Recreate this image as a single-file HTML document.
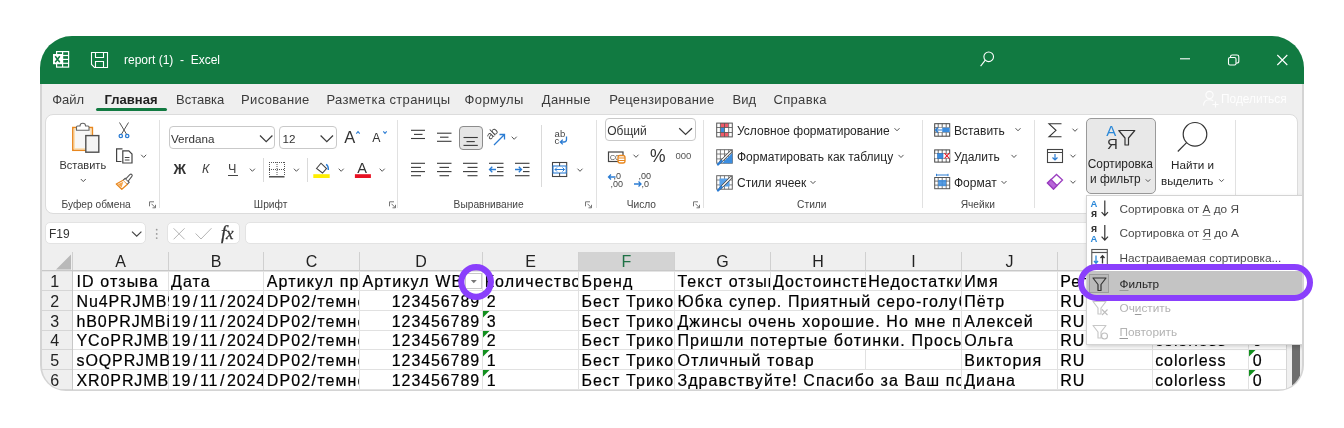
<!DOCTYPE html>
<html><head><meta charset="utf-8">
<style>
*{box-sizing:border-box;margin:0;padding:0}
html,body{width:1344px;height:428px;overflow:hidden;background:#fff;font-family:"Liberation Sans",sans-serif;color:#242424}
#win{position:absolute;left:0;top:0;width:1344px;height:428px;will-change:transform;clip-path:inset(36px 40px 37px 40px round 32px 32px 26px 26px)}
.a{position:absolute}
.t{position:absolute;white-space:pre}
svg{position:absolute;left:0;top:0;overflow:visible}
</style></head><body>
<div id="win">
<div class="a" style="left:40px;top:36px;width:1264px;height:356px;background:#efefef"></div>
<div class="a" style="left:40px;top:36px;width:2px;height:356px;background:#d6d6d6"></div>
<div class="a" style="left:1302px;top:36px;width:2px;height:356px;background:#d6d6d6"></div>
<div class="a" style="left:40px;top:36px;width:1264px;height:48px;background:#117a41"></div>
<div class="t" style="left:124.00px;top:54.24px;font-size:12px;line-height:12px;color:#fff;">report (1)  -  Excel</div>
<div class="t" style="left:52.20px;top:93.40px;font-size:13px;line-height:13px;color:#3b3b3b;">Файл</div>
<div class="t" style="left:104.60px;top:93.40px;font-size:13px;line-height:13px;color:#222;font-weight:700;">Главная</div>
<div class="t" style="left:176.00px;top:93.40px;font-size:13px;line-height:13px;color:#3b3b3b;">Вставка</div>
<div class="t" style="left:241.00px;top:93.40px;font-size:13px;line-height:13px;color:#3b3b3b;letter-spacing:0.35px;">Рисование</div>
<div class="t" style="left:326.50px;top:93.40px;font-size:13px;line-height:13px;color:#3b3b3b;letter-spacing:0.35px;">Разметка страницы</div>
<div class="t" style="left:464.60px;top:93.40px;font-size:13px;line-height:13px;color:#3b3b3b;letter-spacing:0.35px;">Формулы</div>
<div class="t" style="left:541.80px;top:93.40px;font-size:13px;line-height:13px;color:#3b3b3b;letter-spacing:0.35px;">Данные</div>
<div class="t" style="left:609.20px;top:93.40px;font-size:13px;line-height:13px;color:#3b3b3b;letter-spacing:0.35px;">Рецензирование</div>
<div class="t" style="left:732.50px;top:93.40px;font-size:13px;line-height:13px;color:#3b3b3b;">Вид</div>
<div class="t" style="left:773.40px;top:93.40px;font-size:13px;line-height:13px;color:#3b3b3b;letter-spacing:0.35px;">Справка</div>
<div class="a" style="left:96px;top:108px;width:71px;height:3px;background:#117a41;border-radius:1.5px"></div>
<div class="t" style="left:1221.00px;top:93.93px;font-size:11.9px;line-height:11.9px;color:#fff;opacity:0.95">Поделиться</div>
<svg width="1344" height="428"><g fill="none" stroke="#fff" stroke-width="1.2"><rect x="56.6" y="51.6" width="12" height="15.5"/><line x1="62.6" y1="51.6" x2="62.6" y2="67.1"/><line x1="62.6" y1="55.5" x2="68.6" y2="55.5"/><line x1="62.6" y1="59.4" x2="68.6" y2="59.4"/><line x1="62.6" y1="63.3" x2="68.6" y2="63.3"/></g><rect x="53" y="54" width="9.2" height="10.2" fill="#fff"/><path d="M55.2 56.2 L59.8 62.2 M59.8 56.2 L55.2 62.2" stroke="#117a41" stroke-width="1.5"/><g fill="none" stroke="#fff" stroke-width="1.1"><path d="M91.5 52.5 H107.5 V67.5 H94.5 L91.5 64.5 Z"/><path d="M95.5 52.5 V57.5 H103.5 V52.5"/><path d="M95.5 67.5 V61.5 H103.5 V67.5"/></g><g fill="none" stroke="#fff" stroke-width="1.1"><circle cx="988.7" cy="56.8" r="4.8"/><line x1="985.3" y1="60.2" x2="980.6" y2="66.2"/><line x1="1180" y1="58.8" x2="1190" y2="58.8"/><rect x="1228.5" y="57.5" width="7.5" height="7.5" rx="1.5"/><path d="M1230.5 57.5 V56.8 Q1230.5 55 1232.3 55 H1237 Q1238.8 55 1238.8 56.8 V61.5 Q1238.8 63.2 1236.2 63.2"/><path d="M1277.3 55 L1287.3 65 M1287.3 55 L1277.3 65"/></g><g fill="none" stroke="#fff" stroke-width="1.1" opacity="0.9"><circle cx="1209.5" cy="95" r="3.6"/><path d="M1203.5 105.5 Q1203.8 99.8 1209.5 99.8 Q1211.8 99.8 1213.2 100.8"/><path d="M1212.5 104.5 H1218.5 M1215.5 101.5 V107.5"/></g></svg>
<div class="a" style="left:45px;top:114px;width:1253px;height:100px;background:#fff;border:1px solid #dcdcdc;border-radius:8px"></div>
<div class="t" style="left:59.50px;top:159.69px;font-size:11px;line-height:11px;color:#333;">Вставить</div>
<div class="t" style="left:61.50px;top:199.77px;font-size:10.2px;line-height:10.2px;color:#444;">Буфер обмена</div>
<div class="a" style="left:159px;top:120px;width:1px;height:88px;background:#e1e1e1"></div>
<div class="a" style="left:168.8px;top:126.4px;width:106.6px;height:23px;border:1px solid #c9c9c9;border-radius:4px;background:#fff"></div>
<div class="t" style="left:171.00px;top:132.94px;font-size:11.65px;line-height:11.65px;color:#333;">Verdana</div>
<div class="a" style="left:279.4px;top:126.4px;width:57.8px;height:23px;border:1px solid #c9c9c9;border-radius:4px;background:#fff"></div>
<div class="t" style="left:282.50px;top:132.94px;font-size:11.65px;line-height:11.65px;color:#333;">12</div>
<div class="t" style="left:344.20px;top:128.83px;font-size:16.5px;line-height:16.5px;color:#333;">A</div>
<div class="t" style="left:372.30px;top:132.39px;font-size:12.3px;line-height:12.3px;color:#333;">A</div>
<div class="t" style="left:173.60px;top:162.52px;font-size:13.8px;line-height:13.8px;color:#333;font-weight:700;">Ж</div>
<div class="t" style="left:202.00px;top:163.33px;font-size:12.6px;line-height:12.6px;color:#444;font-style:italic">К</div>
<div class="t" style="left:228.00px;top:163.33px;font-size:12.6px;line-height:12.6px;color:#444;">Ч</div>
<div class="a" style="left:228px;top:175.3px;width:9.5px;height:1.2px;background:#444"></div>
<div class="a" style="left:262.5px;top:158px;width:1px;height:24px;background:#dadada"></div>
<div class="a" style="left:306.6px;top:158px;width:1px;height:24px;background:#dadada"></div>
<div class="t" style="left:357.20px;top:160.84px;font-size:14.6px;line-height:14.6px;color:#333;">A</div>
<div class="t" style="left:253.80px;top:199.77px;font-size:10.2px;line-height:10.2px;color:#444;">Шрифт</div>
<div class="a" style="left:397.4px;top:120px;width:1px;height:88px;background:#e1e1e1"></div>
<div class="a" style="left:458.9px;top:126.4px;width:23.9px;height:23.2px;background:#e6e6e6;border:1px solid #8c8c8c;border-radius:4px"></div>
<div class="t" style="left:486px;top:128px;font-size:11px;line-height:11px;color:#444;transform:rotate(-45deg);transform-origin:50% 50%">ab</div>
<div class="a" style="left:541.3px;top:125px;width:1px;height:62px;background:#dadada"></div>
<div class="t" style="left:554.60px;top:129.46px;font-size:9.5px;line-height:9.5px;color:#444;">ab</div>
<div class="t" style="left:554.60px;top:135.56px;font-size:9.5px;line-height:9.5px;color:#444;">c</div>
<div class="t" style="left:453.60px;top:199.77px;font-size:10.2px;line-height:10.2px;color:#444;">Выравнивание</div>
<div class="a" style="left:595.5px;top:120px;width:1px;height:88px;background:#e1e1e1"></div>
<div class="a" style="left:605.4px;top:118.4px;width:90.2px;height:23px;border:1px solid #c9c9c9;border-radius:4px;background:#fff"></div>
<div class="t" style="left:607.20px;top:124.74px;font-size:12px;line-height:12px;color:#333;">Общий</div>
<div class="t" style="left:650.00px;top:147.59px;font-size:17.5px;line-height:17.5px;color:#333;">%</div>
<div class="t" style="left:675.50px;top:150.86px;font-size:9.5px;line-height:9.5px;color:#555;">000</div>
<div class="t" style="left:613.50px;top:171.88px;font-size:9px;line-height:9px;color:#444;">,0</div>
<div class="t" style="left:610.50px;top:179.88px;font-size:9px;line-height:9px;color:#444;">,00</div>
<div class="t" style="left:638.50px;top:171.88px;font-size:9px;line-height:9px;color:#444;">,00</div>
<div class="t" style="left:641.50px;top:179.88px;font-size:9px;line-height:9px;color:#444;">,0</div>
<div class="t" style="left:491.40px;width:300px;text-align:center;top:199.77px;font-size:10.2px;line-height:10.2px;color:#444;">Число</div>
<div class="a" style="left:703px;top:120px;width:1px;height:88px;background:#e1e1e1"></div>
<div class="t" style="left:737.00px;top:124.74px;font-size:12px;line-height:12px;color:#262626;">Условное форматирование</div>
<div class="t" style="left:737.00px;top:151.04px;font-size:12px;line-height:12px;color:#262626;">Форматировать как таблицу</div>
<div class="t" style="left:737.00px;top:177.24px;font-size:12px;line-height:12px;color:#262626;">Стили ячеек</div>
<div class="t" style="left:661.80px;width:300px;text-align:center;top:199.77px;font-size:10.2px;line-height:10.2px;color:#444;">Стили</div>
<div class="a" style="left:921.5px;top:120px;width:1px;height:88px;background:#e1e1e1"></div>
<div class="t" style="left:954.00px;top:124.74px;font-size:12px;line-height:12px;color:#262626;">Вставить</div>
<div class="t" style="left:954.00px;top:151.04px;font-size:12px;line-height:12px;color:#262626;">Удалить</div>
<div class="t" style="left:954.00px;top:177.24px;font-size:12px;line-height:12px;color:#262626;">Формат</div>
<div class="t" style="left:827.80px;width:300px;text-align:center;top:199.77px;font-size:10.2px;line-height:10.2px;color:#444;">Ячейки</div>
<div class="a" style="left:1034.3px;top:120px;width:1px;height:88px;background:#e1e1e1"></div>
<div class="a" style="left:1085.7px;top:118.4px;width:70.6px;height:75.3px;background:#e8e8e8;border:1px solid #9a9a9a;border-radius:5px"></div>
<div class="t" style="left:1106.30px;top:122.50px;font-size:15px;line-height:15px;color:#2b88d8;">A</div>
<div class="t" style="left:1107.00px;top:135.70px;font-size:15px;line-height:15px;color:#333;">Я</div>
<div class="t" style="left:1087.70px;top:158.73px;font-size:11.9px;line-height:11.9px;color:#262626;">Сортировка</div>
<div class="t" style="left:1090.00px;top:174.43px;font-size:11.9px;line-height:11.9px;color:#262626;">и фильтр</div>
<div class="t" style="left:1171.00px;top:158.90px;font-size:11.7px;line-height:11.7px;color:#262626;">Найти и</div>
<div class="t" style="left:1161.00px;top:174.60px;font-size:11.7px;line-height:11.7px;color:#262626;">выделить</div>
<div class="a" style="left:1235px;top:120px;width:1px;height:88px;background:#e1e1e1"></div>
<svg width="1344" height="428"><rect x="72.8" y="127.5" width="19.6" height="22.8" fill="#f7f7f7" stroke="#e8871e" stroke-width="1.5"/><rect x="74.3" y="129" width="16.6" height="19.8" fill="none" stroke="#fcd9a0" stroke-width="1"/><path d="M76.5 130.2 V127 Q76.5 126 77.5 126 H80 A2.8 2.8 0 0 1 85.6 126 H88 Q89 126 89 127 V130.2 Z" fill="#fff" stroke="#666" stroke-width="1.1"/><rect x="85.8" y="135.6" width="13" height="16.6" fill="#f4f4f4" stroke="#505050" stroke-width="1.4"/><path d="M80.80 179.00 L83.30 181.60 L85.80 179.00" fill="none" stroke="#555" stroke-width="1"/><path d="M119.5 122.5 L126.6 134.3 M128.5 122.5 L121.4 134.3" stroke="#555" stroke-width="1" fill="none"/><circle cx="120.8" cy="136" r="1.7" fill="none" stroke="#2b7cd3" stroke-width="1.3"/><circle cx="127.2" cy="136" r="1.7" fill="none" stroke="#2b7cd3" stroke-width="1.3"/><path d="M121.5 161.5 H116.6 V148.8 H122.5" fill="none" stroke="#444" stroke-width="1.2"/><path d="M122.8 150.8 H128.8 L132 154 V163 H122.8 Z" fill="#fff" stroke="#444" stroke-width="1.2"/><path d="M124.8 157.5 H129.5 M124.8 160 H129.5" stroke="#444" stroke-width="1"/><path d="M141.20 154.80 L143.70 157.40 L146.20 154.80" fill="none" stroke="#555" stroke-width="1"/><path d="M116.3 184 L123.5 180 L127.5 184.3 L121.8 189.2 Z" fill="#fff" stroke="#e8871e" stroke-width="1.3" stroke-linejoin="round"/><path d="M117.8 184.3 L123.3 181.8 L121.6 187.5 Z" fill="#f6a54b"/><path d="M123.3 180.2 L125.2 178.3 L129.2 182.3 L127.4 184.1" fill="#fff" stroke="#555" stroke-width="1.1"/><path d="M125.8 178.8 L129.8 174.6 Q131 173.6 131.9 174.6 Q132.7 175.6 131.7 176.6 L128.3 181" fill="#fff" stroke="#555" stroke-width="1.1"/><path d="M149.5 206.3 V201.8 H154" fill="none" stroke="#777" stroke-width="1"/><path d="M151.5 203.8 L155.5 207.8 M155.5 204.8 V207.8 H152.5" fill="none" stroke="#777" stroke-width="1"/><path d="M260 135.5 L266.2 141.7 L272.4 135.5" fill="none" stroke="#3a3a3a" stroke-width="1.2"/><path d="M320.6 135.5 L326.8 141.7 L333 135.5" fill="none" stroke="#3a3a3a" stroke-width="1.2"/><path d="M356.3 133.6 L358 131.6 L359.7 133.6" fill="none" stroke="#2b7cd3" stroke-width="1.1"/><path d="M383.3 131.3 L385 133.3 L386.7 131.3" fill="none" stroke="#2b7cd3" stroke-width="1.1"/><path d="M249.90 168.70 L252.40 171.30 L254.90 168.70" fill="none" stroke="#555" stroke-width="1"/><g stroke="#555" stroke-width="1" stroke-dasharray="1 1" fill="none"><line x1="269.5" y1="162" x2="269.5" y2="176"/><line x1="284.5" y1="162" x2="284.5" y2="176"/><line x1="269" y1="162.5" x2="285" y2="162.5"/><line x1="277" y1="162" x2="277" y2="176"/><line x1="269" y1="169.5" x2="285" y2="169.5"/></g><line x1="269" y1="176.8" x2="284.5" y2="176.8" stroke="#333" stroke-width="1.3"/><path d="M293.90 168.70 L296.40 171.30 L298.90 168.70" fill="none" stroke="#555" stroke-width="1"/><path d="M316.5 168.5 L321 163.2 L326.5 168.5 L322.5 173 Z" fill="#fff" stroke="#444" stroke-width="1.1"/><path d="M326 164.5 Q328.5 165.5 328.3 170" fill="none" stroke="#2b7cd3" stroke-width="1.5"/><rect x="313.3" y="174.2" width="16.4" height="3.8" fill="#ffee00"/><path d="M338.70 168.70 L341.20 171.30 L343.70 168.70" fill="none" stroke="#555" stroke-width="1"/><rect x="354.9" y="174.2" width="16" height="3.8" fill="#e81123"/><path d="M379.70 168.70 L382.20 171.30 L384.70 168.70" fill="none" stroke="#555" stroke-width="1"/><path d="M389.5 206.3 V201.8 H394" fill="none" stroke="#777" stroke-width="1"/><path d="M391.5 203.8 L395.5 207.8 M395.5 204.8 V207.8 H392.5" fill="none" stroke="#777" stroke-width="1"/><line x1="411" y1="130.3" x2="425" y2="130.3" stroke="#3a3a3a" stroke-width="1.1"/><line x1="414" y1="134.4" x2="422.5" y2="134.4" stroke="#3a3a3a" stroke-width="1.1"/><line x1="411" y1="138.5" x2="425" y2="138.5" stroke="#3a3a3a" stroke-width="1.1"/><line x1="437" y1="133.2" x2="451.5" y2="133.2" stroke="#3a3a3a" stroke-width="1.1"/><line x1="440" y1="137.2" x2="448.5" y2="137.2" stroke="#3a3a3a" stroke-width="1.1"/><line x1="437" y1="141.3" x2="451.5" y2="141.3" stroke="#3a3a3a" stroke-width="1.1"/><line x1="463.5" y1="137.5" x2="477.8" y2="137.5" stroke="#3a3a3a" stroke-width="1.1"/><line x1="466.5" y1="141.6" x2="474.8" y2="141.6" stroke="#3a3a3a" stroke-width="1.1"/><line x1="463.5" y1="145.4" x2="477.8" y2="145.4" stroke="#3a3a3a" stroke-width="1.1"/><path d="M494 145 L504.5 134.5 M499.5 134.5 H504.5 V139.5" fill="none" stroke="#2b7cd3" stroke-width="1.3"/><path d="M511.70 136.70 L514.20 139.30 L516.70 136.70" fill="none" stroke="#555" stroke-width="1"/><line x1="411" y1="163.3" x2="425" y2="163.3" stroke="#3a3a3a" stroke-width="1.1"/><line x1="411" y1="167.4" x2="421" y2="167.4" stroke="#3a3a3a" stroke-width="1.1"/><line x1="411" y1="171.6" x2="425" y2="171.6" stroke="#3a3a3a" stroke-width="1.1"/><line x1="411" y1="175.7" x2="421" y2="175.7" stroke="#3a3a3a" stroke-width="1.1"/><line x1="437" y1="163.3" x2="451.5" y2="163.3" stroke="#3a3a3a" stroke-width="1.1"/><line x1="439.5" y1="167.4" x2="449" y2="167.4" stroke="#3a3a3a" stroke-width="1.1"/><line x1="437" y1="171.6" x2="451.5" y2="171.6" stroke="#3a3a3a" stroke-width="1.1"/><line x1="439.5" y1="175.7" x2="449" y2="175.7" stroke="#3a3a3a" stroke-width="1.1"/><line x1="463" y1="163.3" x2="477.5" y2="163.3" stroke="#3a3a3a" stroke-width="1.1"/><line x1="467.5" y1="167.4" x2="477.5" y2="167.4" stroke="#3a3a3a" stroke-width="1.1"/><line x1="463" y1="171.6" x2="477.5" y2="171.6" stroke="#3a3a3a" stroke-width="1.1"/><line x1="467.5" y1="175.7" x2="477.5" y2="175.7" stroke="#3a3a3a" stroke-width="1.1"/><line x1="489" y1="163.3" x2="503.5" y2="163.3" stroke="#3a3a3a" stroke-width="1.1"/><line x1="497" y1="167.4" x2="503.5" y2="167.4" stroke="#3a3a3a" stroke-width="1.1"/><line x1="497" y1="171.6" x2="503.5" y2="171.6" stroke="#3a3a3a" stroke-width="1.1"/><line x1="489" y1="175.7" x2="503.5" y2="175.7" stroke="#3a3a3a" stroke-width="1.1"/><path d="M489.5 169.5 H496 M492.3 166.8 L489.5 169.5 L492.3 172.2" fill="none" stroke="#2b7cd3" stroke-width="1.3"/><line x1="515" y1="163.3" x2="529.5" y2="163.3" stroke="#3a3a3a" stroke-width="1.1"/><line x1="523" y1="167.4" x2="529.5" y2="167.4" stroke="#3a3a3a" stroke-width="1.1"/><line x1="523" y1="171.6" x2="529.5" y2="171.6" stroke="#3a3a3a" stroke-width="1.1"/><line x1="515" y1="175.7" x2="529.5" y2="175.7" stroke="#3a3a3a" stroke-width="1.1"/><path d="M515 169.5 H521.5 M518.8 166.8 L521.5 169.5 L518.8 172.2" fill="none" stroke="#2b7cd3" stroke-width="1.3"/><path d="M566.5 136.5 V139.5 Q566.5 142 564 142 H560.5 M562.8 139.6 L560.3 142 L562.8 144.4" fill="none" stroke="#2b7cd3" stroke-width="1.3"/><rect x="552.5" y="162.5" width="14.2" height="14" fill="#fff" stroke="#444" stroke-width="1.1"/><rect x="553" y="166" width="13.2" height="7" fill="#fff" stroke="#2b7cd3" stroke-width="1.1"/><line x1="559.6" y1="162.5" x2="559.6" y2="166" stroke="#444"/><line x1="559.6" y1="173" x2="559.6" y2="176.5" stroke="#444"/><path d="M555 169.5 H564.5 M557 167.5 L555 169.5 L557 171.5 M562.5 167.5 L564.5 169.5 L562.5 171.5" fill="none" stroke="#2b7cd3" stroke-width="1"/><path d="M577.50 168.70 L580.00 171.30 L582.50 168.70" fill="none" stroke="#555" stroke-width="1"/><path d="M585.5 206.3 V201.8 H590" fill="none" stroke="#777" stroke-width="1"/><path d="M587.5 203.8 L591.5 207.8 M591.5 204.8 V207.8 H588.5" fill="none" stroke="#777" stroke-width="1"/><path d="M679.2 128.2 L685.6 134.4 L692 128.2" fill="none" stroke="#3a3a3a" stroke-width="1.2"/><rect x="608.5" y="152" width="14.5" height="9.5" fill="#fff" stroke="#444" stroke-width="1.2"/><text x="610" y="159.5" font-size="7" font-family="Liberation Sans" fill="#444">СС</text><rect x="618" y="155.5" width="7" height="7.5" rx="2" fill="#fff" stroke="#e8871e" stroke-width="1.3"/><path d="M618 158 H625 M618 160.5 H625" stroke="#e8871e" stroke-width="1"/><path d="M633.50 154.70 L636.00 157.30 L638.50 154.70" fill="none" stroke="#555" stroke-width="1"/><path d="M608.5 177 H615.5 M611 174.5 L608.5 177 L611 179.5" fill="none" stroke="#2b7cd3" stroke-width="1.3"/><path d="M634 184 H641 M638.5 181.5 L641 184 L638.5 186.5" fill="none" stroke="#2b7cd3" stroke-width="1.3"/><path d="M693.5 206.3 V201.8 H698" fill="none" stroke="#777" stroke-width="1"/><path d="M695.5 203.8 L699.5 207.8 M699.5 204.8 V207.8 H696.5" fill="none" stroke="#777" stroke-width="1"/><rect x="720.5" y="123" width="8" height="4.5" fill="#ee5a6a"/><rect x="720.5" y="132.2" width="8" height="4.5" fill="#ee5a6a"/><rect x="720.5" y="127.6" width="4" height="4.6" fill="#3b8de0"/><rect x="716.7" y="123.1" width="15.600000000000001" height="13.8" fill="none" stroke="#555" stroke-width="1"/><line x1="720.4" y1="123.1" x2="720.4" y2="136.9" stroke="#555" stroke-width="0.8"/><line x1="724.5" y1="123.1" x2="724.5" y2="136.9" stroke="#555" stroke-width="0.8"/><line x1="728.7" y1="123.1" x2="728.7" y2="136.9" stroke="#555" stroke-width="0.8"/><line x1="716.7" y1="127.5" x2="732.3000000000001" y2="127.5" stroke="#555" stroke-width="0.8"/><line x1="716.7" y1="132.5" x2="732.3000000000001" y2="132.5" stroke="#555" stroke-width="0.8"/><path d="M894.50 128.20 L897.00 130.80 L899.50 128.20" fill="none" stroke="#555" stroke-width="1"/><rect x="716.7" y="149.7" width="15.600000000000001" height="13.5" fill="none" stroke="#666" stroke-width="1"/><line x1="720.4" y1="149.7" x2="720.4" y2="163.2" stroke="#666" stroke-width="0.8"/><line x1="724.5" y1="149.7" x2="724.5" y2="163.2" stroke="#666" stroke-width="0.8"/><line x1="728.7" y1="149.7" x2="728.7" y2="163.2" stroke="#666" stroke-width="0.8"/><line x1="716.7" y1="154.0" x2="732.3000000000001" y2="154.0" stroke="#666" stroke-width="0.8"/><line x1="716.7" y1="158.9" x2="732.3000000000001" y2="158.9" stroke="#666" stroke-width="0.8"/><path d="M722 163.2 L732.3 153 V163.2 Z" fill="#3b8de0"/><path d="M720.5 162 L731 151.5" stroke="#444" stroke-width="2.6" stroke-linecap="round"/><path d="M720.5 162 L731 151.5" stroke="#fff" stroke-width="1.2" stroke-linecap="round"/><path d="M718 164.5 L721.5 161" stroke="#2b7cd3" stroke-width="2.4" stroke-linecap="round"/><path d="M898.50 154.90 L901.00 157.50 L903.50 154.90" fill="none" stroke="#555" stroke-width="1"/><rect x="716.7" y="175.7" width="15.600000000000001" height="13.5" fill="none" stroke="#666" stroke-width="1"/><line x1="720.4" y1="175.7" x2="720.4" y2="189.2" stroke="#666" stroke-width="0.8"/><line x1="724.5" y1="175.7" x2="724.5" y2="189.2" stroke="#666" stroke-width="0.8"/><line x1="728.7" y1="175.7" x2="728.7" y2="189.2" stroke="#666" stroke-width="0.8"/><line x1="716.7" y1="180.0" x2="732.3000000000001" y2="180.0" stroke="#666" stroke-width="0.8"/><line x1="716.7" y1="184.9" x2="732.3000000000001" y2="184.9" stroke="#666" stroke-width="0.8"/><rect x="719.5" y="178.5" width="10" height="8" fill="#5aa2ea"/><path d="M720.5 188 L731 177.5" stroke="#444" stroke-width="2.6" stroke-linecap="round"/><path d="M720.5 188 L731 177.5" stroke="#fff" stroke-width="1.2" stroke-linecap="round"/><path d="M718 190.5 L721.5 187" stroke="#2b7cd3" stroke-width="2.4" stroke-linecap="round"/><path d="M810.50 181.00 L813.00 183.60 L815.50 181.00" fill="none" stroke="#555" stroke-width="1"/><rect x="934.7" y="123.7" width="15" height="12.5" fill="none" stroke="#444" stroke-width="1"/><line x1="938.2" y1="123.7" x2="938.2" y2="136.2" stroke="#444" stroke-width="0.8"/><line x1="942.2" y1="123.7" x2="942.2" y2="136.2" stroke="#444" stroke-width="0.8"/><line x1="946.2" y1="123.7" x2="946.2" y2="136.2" stroke="#444" stroke-width="0.8"/><line x1="934.7" y1="127.7" x2="949.7" y2="127.7" stroke="#444" stroke-width="0.8"/><line x1="934.7" y1="132.2" x2="949.7" y2="132.2" stroke="#444" stroke-width="0.8"/><rect x="938.2" y="127.7" width="11.5" height="4.5" fill="#fff"/><rect x="942.2" y="127.7" width="7.5" height="4.5" fill="#3b8de0"/><path d="M935.5 130 H942 M938 127.5 L935.5 130 L938 132.5" fill="none" stroke="#2b7cd3" stroke-width="1.2"/><path d="M1015.50 128.20 L1018.00 130.80 L1020.50 128.20" fill="none" stroke="#555" stroke-width="1"/><rect x="934.7" y="149.9" width="15" height="12.2" fill="none" stroke="#444" stroke-width="1"/><line x1="938.2" y1="149.9" x2="938.2" y2="162.1" stroke="#444" stroke-width="0.8"/><line x1="942.2" y1="149.9" x2="942.2" y2="162.1" stroke="#444" stroke-width="0.8"/><line x1="946.2" y1="149.9" x2="946.2" y2="162.1" stroke="#444" stroke-width="0.8"/><line x1="934.7" y1="153.8" x2="949.7" y2="153.8" stroke="#444" stroke-width="0.8"/><line x1="934.7" y1="158.2" x2="949.7" y2="158.2" stroke="#444" stroke-width="0.8"/><rect x="934.7" y="153.8" width="15" height="4.4" fill="#fff"/><rect x="937.5" y="153.5" width="5.5" height="5" fill="#3b8de0" stroke="#2b6cb3" stroke-width="0.6"/><path d="M944.5 153.2 L949.3 158.5 M949.3 153.2 L944.5 158.5" stroke="#e81123" stroke-width="1.1"/><path d="M1011.50 154.90 L1014.00 157.50 L1016.50 154.90" fill="none" stroke="#555" stroke-width="1"/><rect x="934.7" y="177.5" width="15" height="11.2" fill="none" stroke="#555" stroke-width="1"/><line x1="938.2" y1="177.5" x2="938.2" y2="188.7" stroke="#555" stroke-width="0.8"/><line x1="942.2" y1="177.5" x2="942.2" y2="188.7" stroke="#555" stroke-width="0.8"/><line x1="946.2" y1="177.5" x2="946.2" y2="188.7" stroke="#555" stroke-width="0.8"/><line x1="934.7" y1="181.1" x2="949.7" y2="181.1" stroke="#555" stroke-width="0.8"/><line x1="934.7" y1="185.1" x2="949.7" y2="185.1" stroke="#555" stroke-width="0.8"/><rect x="938.2" y="180" width="8" height="6.2" fill="#3b8de0" opacity="0.85"/><path d="M936.5 175 H948 M936.5 173.8 V176.2 M948 173.8 V176.2" stroke="#2b7cd3" stroke-width="1"/><path d="M1001.50 181.00 L1004.00 183.60 L1006.50 181.00" fill="none" stroke="#555" stroke-width="1"/><path d="M1061.5 123.8 H1049 L1056 130.3 L1049 136.8 H1061.5" fill="none" stroke="#333" stroke-width="1.1"/><path d="M1072.50 128.70 L1075.00 131.30 L1077.50 128.70" fill="none" stroke="#555" stroke-width="1"/><rect x="1047.5" y="149.5" width="15" height="13" fill="#fff" stroke="#444" stroke-width="1.1"/><line x1="1047.5" y1="152.5" x2="1062.5" y2="152.5" stroke="#444" stroke-width="1"/><path d="M1055 154 V160 M1052.5 157.5 L1055 160 L1057.5 157.5" fill="none" stroke="#2b7cd3" stroke-width="1.2"/><path d="M1070.50 154.70 L1073.00 157.30 L1075.50 154.70" fill="none" stroke="#555" stroke-width="1"/><path d="M1047.5 183 L1056.5 174.5 L1062.5 180 L1053.5 189 Z" fill="#fff" stroke="#9b3fc0" stroke-width="1.3"/><path d="M1047.5 183 L1051 179.5 L1057 185.5 L1053.5 189 Z" fill="#b765d8" stroke="#9b3fc0" stroke-width="1.3"/><path d="M1070.50 180.70 L1073.00 183.30 L1075.50 180.70" fill="none" stroke="#555" stroke-width="1"/><path d="M1118.8 130.5 H1134.8 L1128.5 138 V145 H1125 V138 Z" fill="none" stroke="#333" stroke-width="1.2" stroke-linejoin="round"/><path d="M1145.75 179.35 L1148.00 181.65 L1150.25 179.35" fill="none" stroke="#555" stroke-width="1"/><circle cx="1195" cy="134.3" r="11.8" fill="none" stroke="#333" stroke-width="1.2"/><line x1="1186.6" y1="142.7" x2="1177.8" y2="151.5" stroke="#333" stroke-width="1.2"/><path d="M1219.25 179.35 L1221.50 181.65 L1223.75 179.35" fill="none" stroke="#555" stroke-width="1"/></svg>
<div class="a" style="left:45.2px;top:222.2px;width:101px;height:22.3px;background:#fff;border:1px solid #e3e3e3;border-radius:5px"></div>
<div class="t" style="left:49.00px;top:228.24px;font-size:12px;line-height:12px;color:#333;">F19</div>
<div class="a" style="left:167px;top:222.2px;width:73px;height:22.3px;background:#fff;border:1px solid #e3e3e3;border-radius:5px"></div>
<div class="t" style="left:221px;top:223.8px;font-family:'Liberation Serif';font-style:italic;font-size:19px;line-height:18px;color:#333;letter-spacing:-0.3px;-webkit-text-stroke:0.3px #333">f<span style="font-size:17px">x</span></div>
<div class="a" style="left:244.5px;top:222.2px;width:1060px;height:22.3px;background:#fff;border:1px solid #e3e3e3;border-radius:5px"></div>
<svg width="1344" height="428"><path d="M132 231.6 L136.7 236.2 L141.4 231.6" fill="none" stroke="#444" stroke-width="1.2"/><circle cx="156.7" cy="229.7" r="0.9" fill="#999"/><circle cx="156.7" cy="233.9" r="0.9" fill="#999"/><circle cx="156.7" cy="238.1" r="0.9" fill="#999"/><path d="M173.6 228.3 L184.6 239.3 M184.6 228.3 L173.6 239.3" stroke="#b5b5b5" stroke-width="1"/><path d="M195.6 233.5 L201 239 L211.5 228.2" fill="none" stroke="#b5b5b5" stroke-width="1"/></svg>
<div class="a" style="left:42px;top:244px;width:1260px;height:27px;background:#efefef"></div>
<div class="a" style="left:73px;top:271px;width:1213.5px;height:120px;background:#fff"></div>
<div class="a" style="left:42px;top:271px;width:30px;height:120px;background:#efefef"></div>
<div class="a" style="left:578px;top:252px;width:97px;height:18px;background:#d3d3d3"></div>
<div class="a" style="left:578px;top:269.8px;width:97px;height:1.6px;background:#1e7145"></div>
<div class="a" style="left:72.0px;top:252px;width:1px;height:19.1px;background:#d0d0d0"></div>
<div class="a" style="left:168.0px;top:252px;width:1px;height:19.1px;background:#d0d0d0"></div>
<div class="a" style="left:263.0px;top:252px;width:1px;height:19.1px;background:#d0d0d0"></div>
<div class="a" style="left:359.0px;top:252px;width:1px;height:19.1px;background:#d0d0d0"></div>
<div class="a" style="left:482.0px;top:252px;width:1px;height:19.1px;background:#d0d0d0"></div>
<div class="a" style="left:578.0px;top:252px;width:1px;height:19.1px;background:#d0d0d0"></div>
<div class="a" style="left:674.0px;top:252px;width:1px;height:19.1px;background:#d0d0d0"></div>
<div class="a" style="left:770.0px;top:252px;width:1px;height:19.1px;background:#d0d0d0"></div>
<div class="a" style="left:865.0px;top:252px;width:1px;height:19.1px;background:#d0d0d0"></div>
<div class="a" style="left:961.0px;top:252px;width:1px;height:19.1px;background:#d0d0d0"></div>
<div class="a" style="left:1057.0px;top:252px;width:1px;height:19.1px;background:#d0d0d0"></div>
<div class="a" style="left:1152.0px;top:252px;width:1px;height:19.1px;background:#d0d0d0"></div>
<div class="a" style="left:1248.0px;top:252px;width:1px;height:19.1px;background:#d0d0d0"></div>
<div class="a" style="left:42px;top:270px;width:1244.5px;height:1px;background:#c8c8c8"></div>
<div class="a" style="left:42px;top:271px;width:1244.5px;height:1px;background:#e4e4e4"></div>
<div class="a" style="left:72px;top:271px;width:1px;height:120px;background:#c8c8c8"></div>
<div class="t" style="left:-29.50px;width:300px;text-align:center;top:254.06px;font-size:16px;line-height:16px;color:#222;">A</div>
<div class="t" style="left:66.00px;width:300px;text-align:center;top:254.06px;font-size:16px;line-height:16px;color:#222;">B</div>
<div class="t" style="left:161.50px;width:300px;text-align:center;top:254.06px;font-size:16px;line-height:16px;color:#222;">C</div>
<div class="t" style="left:271.00px;width:300px;text-align:center;top:254.06px;font-size:16px;line-height:16px;color:#222;">D</div>
<div class="t" style="left:380.50px;width:300px;text-align:center;top:254.06px;font-size:16px;line-height:16px;color:#222;">E</div>
<div class="t" style="left:476.50px;width:300px;text-align:center;top:254.06px;font-size:16px;line-height:16px;color:#1e7145;">F</div>
<div class="t" style="left:572.50px;width:300px;text-align:center;top:254.06px;font-size:16px;line-height:16px;color:#222;">G</div>
<div class="t" style="left:668.00px;width:300px;text-align:center;top:254.06px;font-size:16px;line-height:16px;color:#222;">H</div>
<div class="t" style="left:763.50px;width:300px;text-align:center;top:254.06px;font-size:16px;line-height:16px;color:#222;">I</div>
<div class="t" style="left:859.50px;width:300px;text-align:center;top:254.06px;font-size:16px;line-height:16px;color:#222;">J</div>
<div class="t" style="left:955.00px;width:300px;text-align:center;top:254.06px;font-size:16px;line-height:16px;color:#222;">K</div>
<div class="t" style="left:1050.50px;width:300px;text-align:center;top:254.06px;font-size:16px;line-height:16px;color:#222;">L</div>
<div class="t" style="left:1117.50px;width:300px;text-align:center;top:254.06px;font-size:16px;line-height:16px;color:#222;">M</div>
<div class="t" style="left:-95.40px;width:300px;text-align:center;top:273.96px;font-size:16px;line-height:16px;color:#222;">1</div>
<div class="t" style="left:-95.40px;width:300px;text-align:center;top:293.96px;font-size:16px;line-height:16px;color:#222;">2</div>
<div class="t" style="left:-95.40px;width:300px;text-align:center;top:313.96px;font-size:16px;line-height:16px;color:#222;">3</div>
<div class="t" style="left:-95.40px;width:300px;text-align:center;top:332.96px;font-size:16px;line-height:16px;color:#222;">4</div>
<div class="t" style="left:-95.40px;width:300px;text-align:center;top:352.96px;font-size:16px;line-height:16px;color:#222;">5</div>
<div class="t" style="left:-95.40px;width:300px;text-align:center;top:372.96px;font-size:16px;line-height:16px;color:#222;">6</div>
<div class="a" style="left:72.5px;top:290.0px;width:1214px;height:1px;background:#e1e1e1"></div>
<div class="a" style="left:42px;top:290.0px;width:30px;height:1px;background:#d6d6d6"></div>
<div class="a" style="left:72.5px;top:310.0px;width:1214px;height:1px;background:#e1e1e1"></div>
<div class="a" style="left:42px;top:310.0px;width:30px;height:1px;background:#d6d6d6"></div>
<div class="a" style="left:72.5px;top:330.0px;width:1214px;height:1px;background:#e1e1e1"></div>
<div class="a" style="left:42px;top:330.0px;width:30px;height:1px;background:#d6d6d6"></div>
<div class="a" style="left:72.5px;top:349.0px;width:1214px;height:1px;background:#e1e1e1"></div>
<div class="a" style="left:42px;top:349.0px;width:30px;height:1px;background:#d6d6d6"></div>
<div class="a" style="left:72.5px;top:369.0px;width:1214px;height:1px;background:#e1e1e1"></div>
<div class="a" style="left:42px;top:369.0px;width:30px;height:1px;background:#d6d6d6"></div>
<div class="a" style="left:72.5px;top:389.0px;width:1214px;height:1px;background:#e1e1e1"></div>
<div class="a" style="left:42px;top:389.0px;width:30px;height:1px;background:#d6d6d6"></div>
<div class="a" style="left:168.0px;top:270.5px;width:1px;height:20.0px;background:#e1e1e1"></div>
<div class="a" style="left:168.0px;top:290.5px;width:1px;height:20.0px;background:#e1e1e1"></div>
<div class="a" style="left:168.0px;top:310.5px;width:1px;height:20.0px;background:#e1e1e1"></div>
<div class="a" style="left:168.0px;top:330.5px;width:1px;height:19.0px;background:#e1e1e1"></div>
<div class="a" style="left:168.0px;top:349.5px;width:1px;height:20.0px;background:#e1e1e1"></div>
<div class="a" style="left:168.0px;top:369.5px;width:1px;height:20.0px;background:#e1e1e1"></div>
<div class="a" style="left:263.0px;top:270.5px;width:1px;height:20.0px;background:#e1e1e1"></div>
<div class="a" style="left:263.0px;top:290.5px;width:1px;height:20.0px;background:#e1e1e1"></div>
<div class="a" style="left:263.0px;top:310.5px;width:1px;height:20.0px;background:#e1e1e1"></div>
<div class="a" style="left:263.0px;top:330.5px;width:1px;height:19.0px;background:#e1e1e1"></div>
<div class="a" style="left:263.0px;top:349.5px;width:1px;height:20.0px;background:#e1e1e1"></div>
<div class="a" style="left:263.0px;top:369.5px;width:1px;height:20.0px;background:#e1e1e1"></div>
<div class="a" style="left:359.0px;top:270.5px;width:1px;height:20.0px;background:#e1e1e1"></div>
<div class="a" style="left:359.0px;top:290.5px;width:1px;height:20.0px;background:#e1e1e1"></div>
<div class="a" style="left:359.0px;top:310.5px;width:1px;height:20.0px;background:#e1e1e1"></div>
<div class="a" style="left:359.0px;top:330.5px;width:1px;height:19.0px;background:#e1e1e1"></div>
<div class="a" style="left:359.0px;top:349.5px;width:1px;height:20.0px;background:#e1e1e1"></div>
<div class="a" style="left:359.0px;top:369.5px;width:1px;height:20.0px;background:#e1e1e1"></div>
<div class="a" style="left:482.0px;top:270.5px;width:1px;height:20.0px;background:#e1e1e1"></div>
<div class="a" style="left:482.0px;top:290.5px;width:1px;height:20.0px;background:#e1e1e1"></div>
<div class="a" style="left:482.0px;top:310.5px;width:1px;height:20.0px;background:#e1e1e1"></div>
<div class="a" style="left:482.0px;top:330.5px;width:1px;height:19.0px;background:#e1e1e1"></div>
<div class="a" style="left:482.0px;top:349.5px;width:1px;height:20.0px;background:#e1e1e1"></div>
<div class="a" style="left:482.0px;top:369.5px;width:1px;height:20.0px;background:#e1e1e1"></div>
<div class="a" style="left:578.0px;top:270.5px;width:1px;height:20.0px;background:#e1e1e1"></div>
<div class="a" style="left:578.0px;top:290.5px;width:1px;height:20.0px;background:#e1e1e1"></div>
<div class="a" style="left:578.0px;top:310.5px;width:1px;height:20.0px;background:#e1e1e1"></div>
<div class="a" style="left:578.0px;top:330.5px;width:1px;height:19.0px;background:#e1e1e1"></div>
<div class="a" style="left:578.0px;top:349.5px;width:1px;height:20.0px;background:#e1e1e1"></div>
<div class="a" style="left:578.0px;top:369.5px;width:1px;height:20.0px;background:#e1e1e1"></div>
<div class="a" style="left:674.0px;top:270.5px;width:1px;height:20.0px;background:#e1e1e1"></div>
<div class="a" style="left:674.0px;top:290.5px;width:1px;height:20.0px;background:#e1e1e1"></div>
<div class="a" style="left:674.0px;top:310.5px;width:1px;height:20.0px;background:#e1e1e1"></div>
<div class="a" style="left:674.0px;top:330.5px;width:1px;height:19.0px;background:#e1e1e1"></div>
<div class="a" style="left:674.0px;top:349.5px;width:1px;height:20.0px;background:#e1e1e1"></div>
<div class="a" style="left:674.0px;top:369.5px;width:1px;height:20.0px;background:#e1e1e1"></div>
<div class="a" style="left:770.0px;top:270.5px;width:1px;height:20.0px;background:#e1e1e1"></div>
<div class="a" style="left:865.0px;top:270.5px;width:1px;height:20.0px;background:#e1e1e1"></div>
<div class="a" style="left:865.0px;top:349.5px;width:1px;height:20.0px;background:#e1e1e1"></div>
<div class="a" style="left:961.0px;top:270.5px;width:1px;height:20.0px;background:#e1e1e1"></div>
<div class="a" style="left:961.0px;top:290.5px;width:1px;height:20.0px;background:#e1e1e1"></div>
<div class="a" style="left:961.0px;top:310.5px;width:1px;height:20.0px;background:#e1e1e1"></div>
<div class="a" style="left:961.0px;top:330.5px;width:1px;height:19.0px;background:#e1e1e1"></div>
<div class="a" style="left:961.0px;top:349.5px;width:1px;height:20.0px;background:#e1e1e1"></div>
<div class="a" style="left:961.0px;top:369.5px;width:1px;height:20.0px;background:#e1e1e1"></div>
<div class="a" style="left:1057.0px;top:270.5px;width:1px;height:20.0px;background:#e1e1e1"></div>
<div class="a" style="left:1057.0px;top:290.5px;width:1px;height:20.0px;background:#e1e1e1"></div>
<div class="a" style="left:1057.0px;top:310.5px;width:1px;height:20.0px;background:#e1e1e1"></div>
<div class="a" style="left:1057.0px;top:330.5px;width:1px;height:19.0px;background:#e1e1e1"></div>
<div class="a" style="left:1057.0px;top:349.5px;width:1px;height:20.0px;background:#e1e1e1"></div>
<div class="a" style="left:1057.0px;top:369.5px;width:1px;height:20.0px;background:#e1e1e1"></div>
<div class="a" style="left:1152.0px;top:270.5px;width:1px;height:20.0px;background:#e1e1e1"></div>
<div class="a" style="left:1152.0px;top:290.5px;width:1px;height:20.0px;background:#e1e1e1"></div>
<div class="a" style="left:1152.0px;top:310.5px;width:1px;height:20.0px;background:#e1e1e1"></div>
<div class="a" style="left:1152.0px;top:330.5px;width:1px;height:19.0px;background:#e1e1e1"></div>
<div class="a" style="left:1152.0px;top:349.5px;width:1px;height:20.0px;background:#e1e1e1"></div>
<div class="a" style="left:1152.0px;top:369.5px;width:1px;height:20.0px;background:#e1e1e1"></div>
<div class="a" style="left:1248.0px;top:270.5px;width:1px;height:20.0px;background:#e1e1e1"></div>
<div class="a" style="left:1248.0px;top:290.5px;width:1px;height:20.0px;background:#e1e1e1"></div>
<div class="a" style="left:1248.0px;top:310.5px;width:1px;height:20.0px;background:#e1e1e1"></div>
<div class="a" style="left:1248.0px;top:330.5px;width:1px;height:19.0px;background:#e1e1e1"></div>
<div class="a" style="left:1248.0px;top:349.5px;width:1px;height:20.0px;background:#e1e1e1"></div>
<div class="a" style="left:1248.0px;top:369.5px;width:1px;height:20.0px;background:#e1e1e1"></div>
<div class="a" style="left:1286.0px;top:270.5px;width:1px;height:20.0px;background:#e1e1e1"></div>
<div class="a" style="left:1286.0px;top:290.5px;width:1px;height:20.0px;background:#e1e1e1"></div>
<div class="a" style="left:1286.0px;top:310.5px;width:1px;height:20.0px;background:#e1e1e1"></div>
<div class="a" style="left:1286.0px;top:330.5px;width:1px;height:19.0px;background:#e1e1e1"></div>
<div class="a" style="left:1286.0px;top:349.5px;width:1px;height:20.0px;background:#e1e1e1"></div>
<div class="a" style="left:1286.0px;top:369.5px;width:1px;height:20.0px;background:#e1e1e1"></div>
<div class="a" style="left:1286px;top:252px;width:6px;height:140px;background:#f0f0f0"></div>
<div class="a" style="left:1286px;top:252px;width:1px;height:140px;background:#d6d6d6"></div>
<div class="a" style="left:1292.2px;top:252px;width:8.1px;height:140px;background:#6e6e6e"></div>
<div class="t" style="left:76.50px;top:273.96px;width:92.00px;overflow:hidden;font-size:16px;line-height:16px;color:#000;letter-spacing:1.1px;-webkit-text-stroke:0.2px #000;">ID отзыва</div>
<div class="t" style="left:171.00px;top:273.96px;width:92.50px;overflow:hidden;font-size:16px;line-height:16px;color:#000;letter-spacing:1.1px;-webkit-text-stroke:0.2px #000;">Дата</div>
<div class="t" style="left:266.80px;top:273.96px;width:92.70px;overflow:hidden;font-size:16px;line-height:16px;color:#000;letter-spacing:1.1px;-webkit-text-stroke:0.2px #000;">Артикул пр</div>
<div class="t" style="left:362.40px;top:273.96px;width:120.10px;overflow:hidden;font-size:16px;line-height:16px;color:#000;letter-spacing:1.1px;-webkit-text-stroke:0.2px #000;">Артикул WB</div>
<div class="t" style="left:484.70px;top:273.96px;width:93.80px;overflow:hidden;font-size:16px;line-height:16px;color:#000;letter-spacing:1.1px;-webkit-text-stroke:0.2px #000;">Количество</div>
<div class="t" style="left:581.40px;top:273.96px;width:93.10px;overflow:hidden;font-size:16px;line-height:16px;color:#000;letter-spacing:1.1px;-webkit-text-stroke:0.2px #000;">Бренд</div>
<div class="t" style="left:677.40px;top:273.96px;width:93.10px;overflow:hidden;font-size:16px;line-height:16px;color:#000;letter-spacing:1.1px;-webkit-text-stroke:0.2px #000;">Текст отзыва</div>
<div class="t" style="left:773.00px;top:273.96px;width:92.50px;overflow:hidden;font-size:16px;line-height:16px;color:#000;letter-spacing:1.1px;-webkit-text-stroke:0.2px #000;">Достоинства</div>
<div class="t" style="left:868.20px;top:273.96px;width:93.30px;overflow:hidden;font-size:16px;line-height:16px;color:#000;letter-spacing:1.1px;-webkit-text-stroke:0.2px #000;">Недостатки</div>
<div class="t" style="left:964.20px;top:273.96px;width:93.30px;overflow:hidden;font-size:16px;line-height:16px;color:#000;letter-spacing:1.1px;-webkit-text-stroke:0.2px #000;">Имя</div>
<div class="t" style="left:1060.20px;top:273.96px;width:92.30px;overflow:hidden;font-size:16px;line-height:16px;color:#000;letter-spacing:1.1px;-webkit-text-stroke:0.2px #000;">Регион</div>
<div class="t" style="left:76.50px;top:293.96px;width:92.00px;overflow:hidden;font-size:16px;line-height:16px;color:#000;letter-spacing:0.9px;-webkit-text-stroke:0.2px #000;">Nu4PRJMB9</div>
<div class="t" style="left:171.80px;top:293.96px;width:91.70px;overflow:hidden;font-size:16px;line-height:16px;color:#000;letter-spacing:0.9px;-webkit-text-stroke:0.2px #000;">19<span style="margin:0 1.6px">/</span>11<span style="margin:0 1.6px">/</span>2024</div>
<div class="t" style="left:266.80px;top:293.96px;width:92.70px;overflow:hidden;font-size:16px;line-height:16px;color:#000;letter-spacing:1.1px;-webkit-text-stroke:0.2px #000;">DP02<span style="margin:0 0.2px">/</span>темно-синий</div>
<div class="t" style="left:359.50px;top:293.96px;width:120.50px;overflow:hidden;font-size:16px;line-height:16px;color:#000;letter-spacing:0.9px;-webkit-text-stroke:0.2px #000;text-align:right;">123456789</div>
<div class="t" style="left:486.70px;top:293.96px;width:91.80px;overflow:hidden;font-size:16px;line-height:16px;color:#000;letter-spacing:0.9px;-webkit-text-stroke:0.2px #000;">2</div>
<div class="t" style="left:581.40px;top:293.96px;width:93.10px;overflow:hidden;font-size:16px;line-height:16px;color:#000;letter-spacing:1.1px;-webkit-text-stroke:0.2px #000;">Бест Трико</div>
<div class="t" style="left:677.40px;top:293.96px;width:284.10px;overflow:hidden;font-size:16px;line-height:16px;color:#000;letter-spacing:1.1px;-webkit-text-stroke:0.2px #000;">Юбка супер. Приятный серо-голубой</div>
<div class="t" style="left:964.20px;top:293.96px;width:93.30px;overflow:hidden;font-size:16px;line-height:16px;color:#000;letter-spacing:1.1px;-webkit-text-stroke:0.2px #000;">Пётр</div>
<div class="t" style="left:1060.20px;top:293.96px;width:92.30px;overflow:hidden;font-size:16px;line-height:16px;color:#000;letter-spacing:0.9px;-webkit-text-stroke:0.2px #000;">RU</div>
<div class="t" style="left:1155.20px;top:293.96px;width:93.30px;overflow:hidden;font-size:16px;line-height:16px;color:#000;letter-spacing:0.9px;-webkit-text-stroke:0.2px #000;">colorless</div>
<div class="t" style="left:1252.70px;top:293.96px;width:33.80px;overflow:hidden;font-size:16px;line-height:16px;color:#000;letter-spacing:0.9px;-webkit-text-stroke:0.2px #000;">0</div>
<div class="t" style="left:76.50px;top:313.96px;width:92.00px;overflow:hidden;font-size:16px;line-height:16px;color:#000;letter-spacing:0.9px;-webkit-text-stroke:0.2px #000;">hB0PRJMBiI</div>
<div class="t" style="left:171.80px;top:313.96px;width:91.70px;overflow:hidden;font-size:16px;line-height:16px;color:#000;letter-spacing:0.9px;-webkit-text-stroke:0.2px #000;">19<span style="margin:0 1.6px">/</span>11<span style="margin:0 1.6px">/</span>2024</div>
<div class="t" style="left:266.80px;top:313.96px;width:92.70px;overflow:hidden;font-size:16px;line-height:16px;color:#000;letter-spacing:1.1px;-webkit-text-stroke:0.2px #000;">DP02<span style="margin:0 0.2px">/</span>темно-синий</div>
<div class="t" style="left:359.50px;top:313.96px;width:120.50px;overflow:hidden;font-size:16px;line-height:16px;color:#000;letter-spacing:0.9px;-webkit-text-stroke:0.2px #000;text-align:right;">123456789</div>
<div class="t" style="left:486.70px;top:313.96px;width:91.80px;overflow:hidden;font-size:16px;line-height:16px;color:#000;letter-spacing:0.9px;-webkit-text-stroke:0.2px #000;">3</div>
<div class="t" style="left:581.40px;top:313.96px;width:93.10px;overflow:hidden;font-size:16px;line-height:16px;color:#000;letter-spacing:1.1px;-webkit-text-stroke:0.2px #000;">Бест Трико</div>
<div class="t" style="left:677.40px;top:313.96px;width:284.10px;overflow:hidden;font-size:16px;line-height:16px;color:#000;letter-spacing:1.1px;-webkit-text-stroke:0.2px #000;">Джинсы очень хорошие. Но мне п</div>
<div class="t" style="left:964.20px;top:313.96px;width:93.30px;overflow:hidden;font-size:16px;line-height:16px;color:#000;letter-spacing:1.1px;-webkit-text-stroke:0.2px #000;">Алексей</div>
<div class="t" style="left:1060.20px;top:313.96px;width:92.30px;overflow:hidden;font-size:16px;line-height:16px;color:#000;letter-spacing:0.9px;-webkit-text-stroke:0.2px #000;">RU</div>
<div class="t" style="left:1155.20px;top:313.96px;width:93.30px;overflow:hidden;font-size:16px;line-height:16px;color:#000;letter-spacing:0.9px;-webkit-text-stroke:0.2px #000;">colorless</div>
<div class="t" style="left:1252.70px;top:313.96px;width:33.80px;overflow:hidden;font-size:16px;line-height:16px;color:#000;letter-spacing:0.9px;-webkit-text-stroke:0.2px #000;">0</div>
<div class="t" style="left:76.50px;top:332.96px;width:92.00px;overflow:hidden;font-size:16px;line-height:16px;color:#000;letter-spacing:0.9px;-webkit-text-stroke:0.2px #000;">YCoPRJMBn</div>
<div class="t" style="left:171.80px;top:332.96px;width:91.70px;overflow:hidden;font-size:16px;line-height:16px;color:#000;letter-spacing:0.9px;-webkit-text-stroke:0.2px #000;">19<span style="margin:0 1.6px">/</span>11<span style="margin:0 1.6px">/</span>2024</div>
<div class="t" style="left:266.80px;top:332.96px;width:92.70px;overflow:hidden;font-size:16px;line-height:16px;color:#000;letter-spacing:1.1px;-webkit-text-stroke:0.2px #000;">DP02<span style="margin:0 0.2px">/</span>темно-синий</div>
<div class="t" style="left:359.50px;top:332.96px;width:120.50px;overflow:hidden;font-size:16px;line-height:16px;color:#000;letter-spacing:0.9px;-webkit-text-stroke:0.2px #000;text-align:right;">123456789</div>
<div class="t" style="left:486.70px;top:332.96px;width:91.80px;overflow:hidden;font-size:16px;line-height:16px;color:#000;letter-spacing:0.9px;-webkit-text-stroke:0.2px #000;">2</div>
<div class="t" style="left:581.40px;top:332.96px;width:93.10px;overflow:hidden;font-size:16px;line-height:16px;color:#000;letter-spacing:1.1px;-webkit-text-stroke:0.2px #000;">Бест Трико</div>
<div class="t" style="left:677.40px;top:332.96px;width:284.10px;overflow:hidden;font-size:16px;line-height:16px;color:#000;letter-spacing:1.1px;-webkit-text-stroke:0.2px #000;">Пришли потертые ботинки. Прось</div>
<div class="t" style="left:964.20px;top:332.96px;width:93.30px;overflow:hidden;font-size:16px;line-height:16px;color:#000;letter-spacing:1.1px;-webkit-text-stroke:0.2px #000;">Ольга</div>
<div class="t" style="left:1060.20px;top:332.96px;width:92.30px;overflow:hidden;font-size:16px;line-height:16px;color:#000;letter-spacing:0.9px;-webkit-text-stroke:0.2px #000;">RU</div>
<div class="t" style="left:1155.20px;top:332.96px;width:93.30px;overflow:hidden;font-size:16px;line-height:16px;color:#000;letter-spacing:0.9px;-webkit-text-stroke:0.2px #000;">colorless</div>
<div class="t" style="left:1252.70px;top:332.96px;width:33.80px;overflow:hidden;font-size:16px;line-height:16px;color:#000;letter-spacing:0.9px;-webkit-text-stroke:0.2px #000;">0</div>
<div class="t" style="left:76.50px;top:352.96px;width:92.00px;overflow:hidden;font-size:16px;line-height:16px;color:#000;letter-spacing:0.9px;-webkit-text-stroke:0.2px #000;">sOQPRJMBr</div>
<div class="t" style="left:171.80px;top:352.96px;width:91.70px;overflow:hidden;font-size:16px;line-height:16px;color:#000;letter-spacing:0.9px;-webkit-text-stroke:0.2px #000;">19<span style="margin:0 1.6px">/</span>11<span style="margin:0 1.6px">/</span>2024</div>
<div class="t" style="left:266.80px;top:352.96px;width:92.70px;overflow:hidden;font-size:16px;line-height:16px;color:#000;letter-spacing:1.1px;-webkit-text-stroke:0.2px #000;">DP02<span style="margin:0 0.2px">/</span>темно-синий</div>
<div class="t" style="left:359.50px;top:352.96px;width:120.50px;overflow:hidden;font-size:16px;line-height:16px;color:#000;letter-spacing:0.9px;-webkit-text-stroke:0.2px #000;text-align:right;">123456789</div>
<div class="t" style="left:486.70px;top:352.96px;width:91.80px;overflow:hidden;font-size:16px;line-height:16px;color:#000;letter-spacing:0.9px;-webkit-text-stroke:0.2px #000;">1</div>
<div class="t" style="left:581.40px;top:352.96px;width:93.10px;overflow:hidden;font-size:16px;line-height:16px;color:#000;letter-spacing:1.1px;-webkit-text-stroke:0.2px #000;">Бест Трико</div>
<div class="t" style="left:677.40px;top:352.96px;width:284.10px;overflow:hidden;font-size:16px;line-height:16px;color:#000;letter-spacing:1.1px;-webkit-text-stroke:0.2px #000;">Отличный товар</div>
<div class="t" style="left:964.20px;top:352.96px;width:93.30px;overflow:hidden;font-size:16px;line-height:16px;color:#000;letter-spacing:1.1px;-webkit-text-stroke:0.2px #000;">Виктория</div>
<div class="t" style="left:1060.20px;top:352.96px;width:92.30px;overflow:hidden;font-size:16px;line-height:16px;color:#000;letter-spacing:0.9px;-webkit-text-stroke:0.2px #000;">RU</div>
<div class="t" style="left:1155.20px;top:352.96px;width:93.30px;overflow:hidden;font-size:16px;line-height:16px;color:#000;letter-spacing:0.9px;-webkit-text-stroke:0.2px #000;">colorless</div>
<div class="t" style="left:1252.70px;top:352.96px;width:33.80px;overflow:hidden;font-size:16px;line-height:16px;color:#000;letter-spacing:0.9px;-webkit-text-stroke:0.2px #000;">0</div>
<div class="t" style="left:76.50px;top:372.96px;width:92.00px;overflow:hidden;font-size:16px;line-height:16px;color:#000;letter-spacing:0.9px;-webkit-text-stroke:0.2px #000;">XR0PRJMBe</div>
<div class="t" style="left:171.80px;top:372.96px;width:91.70px;overflow:hidden;font-size:16px;line-height:16px;color:#000;letter-spacing:0.9px;-webkit-text-stroke:0.2px #000;">19<span style="margin:0 1.6px">/</span>11<span style="margin:0 1.6px">/</span>2024</div>
<div class="t" style="left:266.80px;top:372.96px;width:92.70px;overflow:hidden;font-size:16px;line-height:16px;color:#000;letter-spacing:1.1px;-webkit-text-stroke:0.2px #000;">DP02<span style="margin:0 0.2px">/</span>темно-синий</div>
<div class="t" style="left:359.50px;top:372.96px;width:120.50px;overflow:hidden;font-size:16px;line-height:16px;color:#000;letter-spacing:0.9px;-webkit-text-stroke:0.2px #000;text-align:right;">123456789</div>
<div class="t" style="left:486.70px;top:372.96px;width:91.80px;overflow:hidden;font-size:16px;line-height:16px;color:#000;letter-spacing:0.9px;-webkit-text-stroke:0.2px #000;">1</div>
<div class="t" style="left:581.40px;top:372.96px;width:93.10px;overflow:hidden;font-size:16px;line-height:16px;color:#000;letter-spacing:1.1px;-webkit-text-stroke:0.2px #000;">Бест Трико</div>
<div class="t" style="left:677.40px;top:372.96px;width:284.10px;overflow:hidden;font-size:16px;line-height:16px;color:#000;letter-spacing:1.1px;-webkit-text-stroke:0.2px #000;">Здравствуйте! Спасибо за Ваш по</div>
<div class="t" style="left:964.20px;top:372.96px;width:93.30px;overflow:hidden;font-size:16px;line-height:16px;color:#000;letter-spacing:1.1px;-webkit-text-stroke:0.2px #000;">Диана</div>
<div class="t" style="left:1060.20px;top:372.96px;width:92.30px;overflow:hidden;font-size:16px;line-height:16px;color:#000;letter-spacing:0.9px;-webkit-text-stroke:0.2px #000;">RU</div>
<div class="t" style="left:1155.20px;top:372.96px;width:93.30px;overflow:hidden;font-size:16px;line-height:16px;color:#000;letter-spacing:0.9px;-webkit-text-stroke:0.2px #000;">colorless</div>
<div class="t" style="left:1252.70px;top:372.96px;width:33.80px;overflow:hidden;font-size:16px;line-height:16px;color:#000;letter-spacing:0.9px;-webkit-text-stroke:0.2px #000;">0</div>
<div class="a" style="left:465.2px;top:273px;width:17.1px;height:16.2px;background:#fff;border:1px solid #c8c8c8"></div>
<svg width="1344" height="428"><path d="M71 254.5 V269.5 H56 Z" fill="#b9b9b9"/><path d="M483.0 291.0 h6.5 L483.0 297.5 Z" fill="#12901e"/><path d="M1249.0 291.0 h6.5 L1249.0 297.5 Z" fill="#12901e"/><path d="M483.0 311.0 h6.5 L483.0 317.5 Z" fill="#12901e"/><path d="M1249.0 311.0 h6.5 L1249.0 317.5 Z" fill="#12901e"/><path d="M483.0 331.0 h6.5 L483.0 337.5 Z" fill="#12901e"/><path d="M1249.0 331.0 h6.5 L1249.0 337.5 Z" fill="#12901e"/><path d="M483.0 350.0 h6.5 L483.0 356.5 Z" fill="#12901e"/><path d="M1249.0 350.0 h6.5 L1249.0 356.5 Z" fill="#12901e"/><path d="M483.0 370.0 h6.5 L483.0 376.5 Z" fill="#12901e"/><path d="M1249.0 370.0 h6.5 L1249.0 376.5 Z" fill="#12901e"/><path d="M483.0 390.0 h6.5 L483.0 396.5 Z" fill="#12901e"/><path d="M1249.0 390.0 h6.5 L1249.0 396.5 Z" fill="#12901e"/><path d="M470.8 280 H476.8 L473.8 283.2 Z" fill="#777"/><circle cx="476.1" cy="282" r="14.8" fill="none" stroke="#8a3ffc" stroke-width="6.2"/></svg>
<div class="a" style="left:1086px;top:195px;width:218px;height:149.5px;background:#fff;border:1px solid #d4d4d4;box-shadow:1px 2px 4px rgba(0,0,0,0.18)"></div>
<div class="t" style="left:1090.60px;top:198.76px;font-size:9.5px;line-height:9.5px;color:#2b88d8;font-weight:700;">A</div>
<div class="t" style="left:1091.00px;top:207.71px;font-size:10.5px;line-height:10.5px;color:#333;font-weight:700;">я</div>
<div class="t" style="left:1119.50px;top:204.01px;font-size:11.8px;line-height:11.8px;color:#4a4a4a;">Сортировка от <u style="text-decoration-thickness:1px;text-underline-offset:1.5px;text-decoration-color:#999">А</u> до Я</div>
<div class="t" style="left:1091.00px;top:222.71px;font-size:10.5px;line-height:10.5px;color:#333;font-weight:700;">я</div>
<div class="t" style="left:1090.60px;top:233.76px;font-size:9.5px;line-height:9.5px;color:#2b88d8;font-weight:700;">A</div>
<div class="t" style="left:1119.50px;top:228.31px;font-size:11.8px;line-height:11.8px;color:#4a4a4a;">Сортировка от <u style="text-decoration-thickness:1px;text-underline-offset:1.5px;text-decoration-color:#999">Я</u> до А</div>
<div class="t" style="left:1119.50px;top:253.11px;font-size:11.8px;line-height:11.8px;color:#4a4a4a;"><u style="text-decoration-thickness:1px;text-underline-offset:1.5px;text-decoration-color:#999">Н</u>астраиваемая сортировка...</div>
<div class="a" style="left:1086.5px;top:271px;width:216.5px;height:23.5px;background:#c4c4c4"></div>
<div class="a" style="left:1089.4px;top:273.6px;width:20px;height:19px;background:#bababa;border:1px solid #9c9c9c"></div>
<div class="t" style="left:1119.50px;top:278.81px;font-size:11.8px;line-height:11.8px;color:#262626;"><u style="text-decoration-thickness:1px;text-underline-offset:1.5px;text-decoration-color:#999">Ф</u>ильтр</div>
<div class="t" style="left:1119.50px;top:302.91px;font-size:11.8px;line-height:11.8px;color:#b3b3b3;">Оч<u style="text-decoration-thickness:1px;text-underline-offset:1.5px;text-decoration-color:#999">и</u>стить</div>
<div class="t" style="left:1119.50px;top:327.21px;font-size:11.8px;line-height:11.8px;color:#b3b3b3;"><u style="text-decoration-thickness:1px;text-underline-offset:1.5px;text-decoration-color:#999">П</u>овторить</div>
<svg width="1344" height="428"><path d="M1104.8 200.5 V215.5 M1101.6 212.2 L1104.8 215.7 L1108 212.2" fill="none" stroke="#333" stroke-width="1.2"/><path d="M1104.8 225 V240 M1101.6 236.7 L1104.8 240.2 L1108 236.7" fill="none" stroke="#333" stroke-width="1.2"/><rect x="1091.8" y="249.5" width="15.5" height="17" fill="#fff" stroke="#555" stroke-width="1.1"/><line x1="1091.8" y1="252.5" x2="1107.3" y2="252.5" stroke="#555" stroke-width="1.2"/><path d="M1096 255.5 V263 M1094 261 L1096 263.2 L1098 261" fill="none" stroke="#2b88d8" stroke-width="1.3"/><path d="M1102.5 263.5 V256 M1100.5 258 L1102.5 255.8 L1104.5 258" fill="none" stroke="#333" stroke-width="1.3"/><path d="M1093 278 H1106 L1101 284.5 V290.5 H1098 V284.5 Z" fill="none" stroke="#333" stroke-width="1.2" stroke-linejoin="round"/><path d="M1093 301.5 H1106 L1101 308 V314 H1098 V308 Z" fill="none" stroke="#c8c8c8" stroke-width="1.2" stroke-linejoin="round"/><path d="M1102 309.5 L1107.5 315 M1107.5 309.5 L1102 315" stroke="#bdbdbd" stroke-width="1.1"/><path d="M1093 325.5 H1106 L1101 332 V338 H1098 V332 Z" fill="none" stroke="#c8c8c8" stroke-width="1.2" stroke-linejoin="round"/><circle cx="1104.5" cy="336" r="3" fill="#fff" stroke="#bdbdbd" stroke-width="1.1"/></svg>
<div class="a" style="left:40px;top:84px;width:1264px;height:308px;border:2px solid #d4d4d4;border-top:none;border-radius:0 0 26px 26px"></div>
</div>
<div class="a" style="left:1077.8px;top:263.9px;width:235.6px;height:36.9px;border:6.3px solid #8a3ffc;border-radius:19px"></div>
</body></html>
